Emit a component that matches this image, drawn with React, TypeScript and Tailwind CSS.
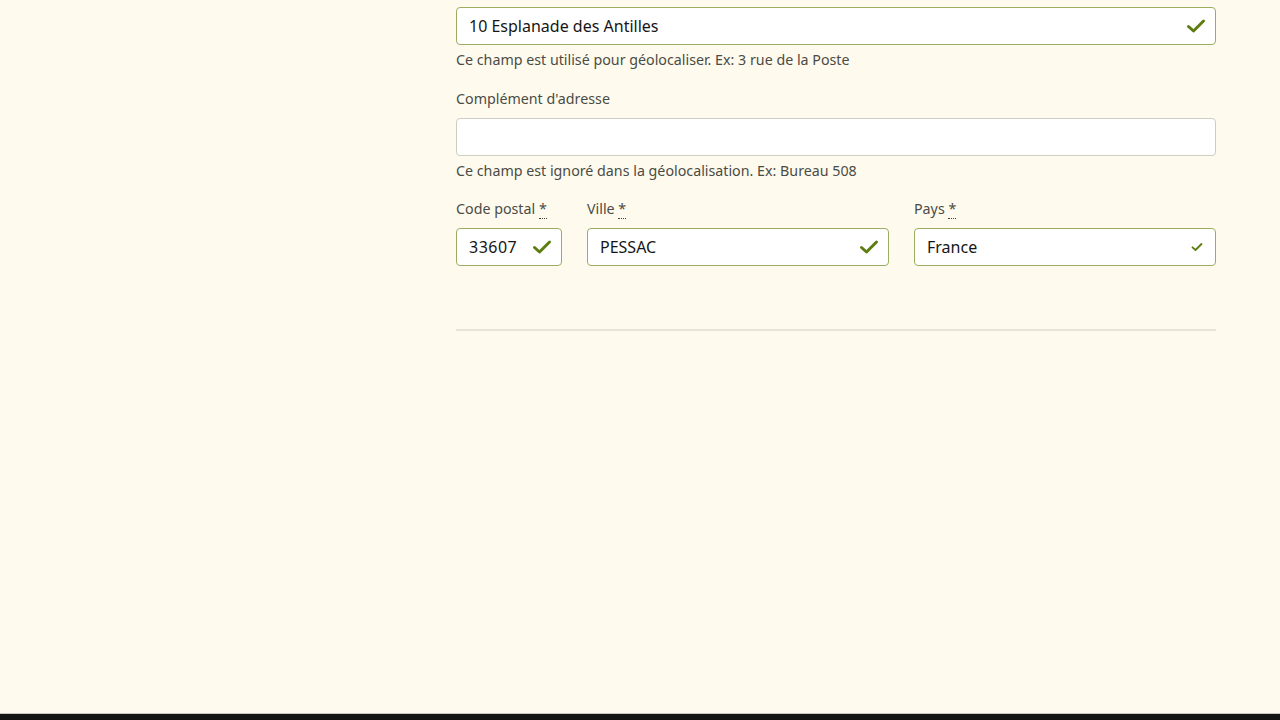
import React from "react";

function Check({ className }: { className?: string }) {
  return (
    <svg viewBox="0 0 20 16" className={className} fill="none">
      <path
        d="M2.5 8.5 L7.5 13 L17.5 3"
        stroke="currentColor"
        strokeWidth="3"
        strokeLinecap="round"
        strokeLinejoin="round"
      />
    </svg>
  );
}

function Required() {
  return (
    <abbr
      title="obligatoire"
      className="no-underline border-b border-dotted border-[#444] leading-none"
    >
      *
    </abbr>
  );
}

function Field({
  label,
  value,
  valid,
  help,
  small,
  mono,
}: {
  label?: React.ReactNode;
  value: string;
  valid?: boolean;
  help?: string;
  small?: boolean;
  mono?: boolean;
}) {
  return (
    <div className="flex flex-col">
      {label && (
        <label className="text-[14.25px] leading-5 text-[#4b4b45] mb-[9px]">
          {label}
        </label>
      )}
      <div
        className={
          "flex items-center h-[38px] rounded-[4px] bg-white border pl-3 pr-[9px] " +
          (valid ? "border-[#9cad62]" : "border-[#cfccc2]")
        }
      >
        <span
          className={
            "flex-1 text-[16px] text-[#161616] truncate " +
            (mono ? "tracking-[0.5px]" : "")
          }
        >
          {value}
        </span>
        {valid &&
          (small ? (
            <Check className="w-[12px] h-[10px] text-[#5e7d10] mr-[3px]" />
          ) : (
            <Check className="w-[20px] h-[16px] text-[#5e7d10]" />
          ))}
      </div>
      {help && (
        <p className="mt-[5px] text-[14.25px] leading-5 text-[#4b4b45]">
          {help}
        </p>
      )}
    </div>
  );
}

export default function App() {
  return (
    <div
      className="flex flex-col h-screen bg-[#fefbee]"
      style={{ fontFamily: '"Noto Sans", "Open Sans", sans-serif' }}
    >
      <main className="flex-1 flex px-16 overflow-hidden">
        <aside className="w-[392px] shrink-0" />
        <section className="w-[760px] pt-[7px]">
          <Field
            value="10 Esplanade des Antilles"
            valid
            help="Ce champ est utilisé pour géolocaliser. Ex: 3 rue de la Poste"
          />
          <div className="mt-[19px]">
            <Field
              label="Complément d'adresse"
              value=""
              help="Ce champ est ignoré dans la géolocalisation. Ex: Bureau 508"
            />
          </div>
          <div className="mt-[18px] grid grid-cols-[106px_1fr_1fr] gap-x-[25px]">
            <Field
              label={
                <>
                  Code postal <Required />
                </>
              }
              value="33607"
              valid
              mono
            />
            <Field
              label={
                <>
                  Ville <Required />
                </>
              }
              value="PESSAC"
              valid
            />
            <Field
              label={
                <>
                  Pays <Required />
                </>
              }
              value="France"
              valid
              small
            />
          </div>
          <hr className="mt-[63px] border-0 h-[2px] bg-[#e8e5d8]" />
        </section>
      </main>
      <footer className="h-[7px] bg-[#141414] border-t border-[#c9c7bd]" />
    </div>
  );
}
